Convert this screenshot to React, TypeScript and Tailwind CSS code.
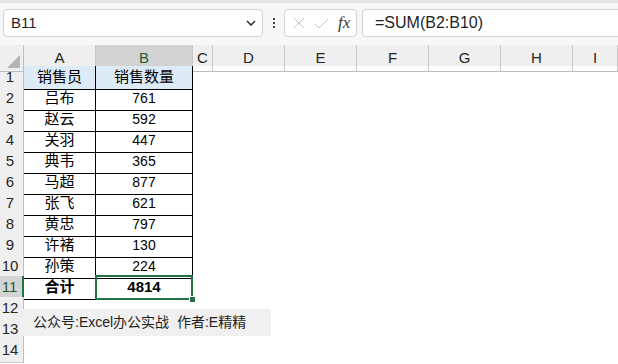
import { ReactElement } from 'react';

const COLS = ['A', 'B', 'C', 'D', 'E', 'F', 'G', 'H', 'I'];
const GRID = 'grid grid-cols-[24px_72px_97px_20px_72px_72px_72px_72px_72px_1fr]';

const rows: [string, string][] = [
  ['销售员', '销售数量'],
  ['吕布', '761'],
  ['赵云', '592'],
  ['关羽', '447'],
  ['典韦', '365'],
  ['马超', '877'],
  ['张飞', '621'],
  ['黄忠', '797'],
  ['许褚', '130'],
  ['孙策', '224'],
  ['合计', '4814'],
];

const font = { fontFamily: '"Liberation Sans", "Noto Sans CJK SC", sans-serif' };

function FormulaBar(): ReactElement {
  return (
    <div className="h-[45px] border-t-[3px] border-[#e4e4e4] bg-[#f7f7f7] pt-[6px] pl-[3px]">
      <div className="flex h-[28px] items-center">
        <div className="flex h-full w-[260px] items-center justify-between rounded-[4px] border border-[#d4d4d4] bg-white pr-[6px] pl-[7px]">
          <span className="text-[15px] text-[#1f1f1f]">B11</span>
          <svg width="10" height="6" viewBox="0 0 10 6">
            <path d="M1 1l4 4 4-4" fill="none" stroke="#333" strokeWidth="1.6" />
          </svg>
        </div>
        <div className="flex w-[21px] flex-col items-center gap-[2px]">
          <span className="h-[2px] w-[2px] bg-[#444]" />
          <span className="h-[2px] w-[2px] bg-[#444]" />
          <span className="h-[2px] w-[2px] bg-[#444]" />
        </div>
        <div className="flex h-full w-[73px] items-center gap-[9px] rounded-[4px] border border-[#d4d4d4] bg-white pl-[8px]">
          <svg width="12" height="12" viewBox="0 0 12 12">
            <path d="M1 1l10 10M11 1L1 11" stroke="#c4c4c4" strokeWidth="1" />
          </svg>
          <svg width="15" height="11" viewBox="0 0 15 11">
            <path d="M1 6l4 4 9-9" fill="none" stroke="#c4c4c4" strokeWidth="1" />
          </svg>
          <span className="text-[17px] italic text-[#3a3a3a]" style={{ fontFamily: '"Liberation Serif", serif' }}>
            fx
          </span>
        </div>
        <div className="ml-[5px] flex h-full flex-1 items-center rounded-l-[4px] border border-r-0 border-[#d4d4d4] bg-white pl-[12px]">
          <span className="text-[16px] text-[#1f1f1f]">=SUM(B2:B10)</span>
        </div>
      </div>
    </div>
  );
}

function ColumnHeader(): ReactElement {
  return (
    <div className={`${GRID} h-[21px] bg-[#efefef]`}>
      <div className="relative border-r border-b border-[#bdbdbd]">
        <svg className="absolute right-[3px] bottom-[3px]" width="13" height="13" viewBox="0 0 13 13">
          <path d="M13 0v13H0z" fill="#b4b4b4" />
        </svg>
      </div>
      {COLS.map((c) => (
        <div
          key={c}
          className={
            c === 'B'
              ? 'flex items-center justify-center border-r border-b-2 border-r-[#c8c8c8] border-b-[#217346] bg-[#d3d3d3] pt-[2px] text-[15px] text-[#1d5a3a]'
              : 'flex items-center justify-center border-r border-b border-r-[#c8c8c8] border-b-[#bdbdbd] pt-[1px] text-[15px] text-[#262626]'
          }
        >
          {c}
        </div>
      ))}
      <div className="border-b border-[#bdbdbd]" />
    </div>
  );
}

function RowHead({ n, active }: { n: number; active?: boolean }): ReactElement {
  return (
    <div
      className={
        active
          ? 'flex items-center justify-center border-r-2 border-b border-r-[#217346] border-b-[#d0d0d0] bg-[#d3d3d3] pr-[3px] text-[15px] text-[#1d5a3a]'
          : 'flex items-center justify-center border-r border-b border-r-[#bdbdbd] border-b-[#d0d0d0] bg-[#efefef] pr-[3px] text-[15px] text-[#262626]'
      }
    >
      {n}
    </div>
  );
}

export default function App(): ReactElement {
  return (
    <div className="relative h-[364px] w-[618px] overflow-hidden bg-white" style={font}>
      <FormulaBar />
      <ColumnHeader />
      {rows.map(([a, b], i) => {
        const header = i === 0;
        const total = i === 10;
        const fill = header ? 'bg-[#ddebf7]' : '';
        return (
          <div key={i} className={`${GRID} h-[21px]`}>
            <RowHead n={i + 1} active={total} />
            <div
              className={`flex items-center justify-center border-r border-b border-black text-[15px] text-black ${fill} ${total ? 'font-bold' : ''}`}
            >
              {a}
            </div>
            <div
              className={`relative flex items-center justify-center border-r border-b border-black text-black ${fill} ${header ? 'text-[15px]' : total ? 'text-[15px] font-bold' : 'text-[14px]'}`}
            >
              {b}
              {total && (
                <>
                  <div className="absolute -top-[1px] -left-[1px] -right-[1px] -bottom-[1px] border-2 border-[#217346]" />
                  <div className="absolute -right-[4px] -bottom-[4px] h-[7px] w-[7px] border border-white bg-[#217346]" />
                </>
              )}
            </div>
          </div>
        );
      })}
      {[12, 13, 14].map((n) => (
        <div key={n} className={`${GRID} h-[21px]`}>
          <RowHead n={n} />
        </div>
      ))}
      <div className="absolute top-[309px] left-[23px] flex h-[27px] w-[248px] items-center bg-[#f0f0f0] pl-[10px] text-[14px] text-[#1f1f1f]">
        公众号:Excel办公实战&nbsp;&nbsp;作者:E精精
      </div>
    </div>
  );
}
